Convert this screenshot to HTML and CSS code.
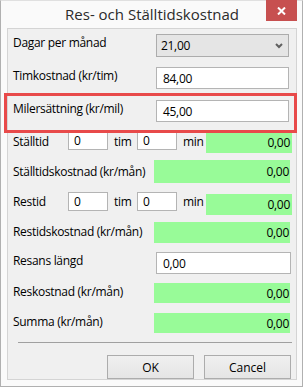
FILE: index.html
```html
<!DOCTYPE html>
<html lang="sv">
<head>
    <meta charset="UTF-8">
    <title>Res- och Ställtidskostnad</title>
    <link rel="stylesheet" href="styles.css">
</head>
<body>
    <div class="window">
        <!-- Titelrad -->
        <div class="titlebar">
            <span class="title">Res- och Ställtidskostnad</span>
            <div class="close">
                <svg width="9" height="8" viewBox="0 0 9 8">
                    <path d="M1 0.5 L8 7.5 M8 0.5 L1 7.5" stroke="#fff" stroke-width="2" fill="none"/>
                </svg>
            </div>
        </div>

        <div class="client">
            <div class="form">
                <div class="row r1">
                    <span class="label">Dagar per månad</span>
                    <div class="combo">
                        <span>21,00</span>
                        <svg width="8" height="6" viewBox="0 0 8 6">
                            <path d="M1 1 L4 4 L7 1" stroke="#606060" stroke-width="2" fill="none"/>
                        </svg>
                    </div>
                </div>
                <div class="row r2">
                    <span class="label">Timkostnad (kr/tim)</span>
                    <div class="field">84,00</div>
                </div>
                <div class="row r3">
                    <span class="label">Milersättning (kr/mil)</span>
                    <div class="field">45,00</div>
                </div>
                <div class="row r4">
                    <span class="label short">Ställtid</span>
                    <div class="small">0</div>
                    <span class="unit">tim</span>
                    <div class="small">0</div>
                    <span class="unit">min</span>
                    <div class="result narrow">0,00</div>
                </div>
                <div class="row r5">
                    <span class="label wide">Ställtidskostnad (kr/mån)</span>
                    <div class="result">0,00</div>
                </div>
                <div class="row r6">
                    <span class="label short">Restid</span>
                    <div class="small">0</div>
                    <span class="unit">tim</span>
                    <div class="small">0</div>
                    <span class="unit">min</span>
                    <div class="result narrow">0,00</div>
                </div>
                <div class="row r7">
                    <span class="label wide">Restidskostnad (kr/mån)</span>
                    <div class="result">0,00</div>
                </div>
                <div class="row r8">
                    <span class="label">Resans längd</span>
                    <div class="field long">0,00</div>
                </div>
                <div class="row r9">
                    <span class="label wide">Reskostnad (kr/mån)</span>
                    <div class="result">0,00</div>
                </div>
                <div class="row r10">
                    <span class="label wide">Summa (kr/mån)</span>
                    <div class="result">0,00</div>
                </div>
            </div>

            <div class="separator"></div>

            <div class="buttons">
                <button class="btn">OK</button>
                <button class="btn">Cancel</button>
            </div>
        </div>

        <!-- markering -->
        <div class="highlight"></div>
    </div>
</body>
</html>
```

FILE: styles.css
```css
* {
    margin: 0;
    padding: 0;
    box-sizing: border-box;
}

body {
    font-family: 'Open Sans', 'Noto Sans', sans-serif;
    font-size: 12px;
    letter-spacing: -0.3px;
    color: #000;
    background: #fff;
}

/* Fönster */
.window {
    position: relative;
    width: 303px;
    height: 387px;
    background: #fafafa;
    border: 1px solid #b0b0b0;
    border-top-color: #e0e0e0;
    padding: 0 5px 6px 6px;
    display: flex;
    flex-direction: column;
}

.titlebar {
    height: 29px;
    display: flex;
    justify-content: center;
    align-items: center;
    position: relative;
}

.title {
    font-size: 15px;
    letter-spacing: 0;
    color: #2b2b2b;
    margin-top: -1px;
}

.close {
    position: absolute;
    top: -1px;
    right: 0;
    width: 31px;
    height: 21px;
    background: #c75050;
    display: flex;
    justify-content: center;
    align-items: center;
}

.client {
    flex: 1;
    background: #f0f0f0;
    border: 1px solid #d4d4d4;
    display: flex;
    flex-direction: column;
}

/* Formulär */
.form {
    padding: 5px 0 0 5px;
}

.row {
    display: flex;
    align-items: flex-start;
}

.r1 { height: 33px; }
.r2 { height: 33px; }
.r3 { height: 30px; }
.r4 { height: 30px; }
.r5 { height: 32px; }
.r6 { height: 30px; }
.r7 { height: 30px; }
.r8 { height: 31px; }
.r9 { height: 30px; }
.r10 { height: 25px; }

.label {
    width: 143px;
    line-height: 16px;
    margin-top: 1px;
    white-space: nowrap;
}

.label.wide {
    width: 141px;
}

.label.short {
    width: 55px;
}

.r4 .label,
.r5 .label {
    margin-top: 4px;
}

.r6 .label,
.r7 .label {
    margin-top: 2px;
}

.combo {
    width: 133px;
    height: 23px;
    background: #e5e5e5;
    border: 1px solid #acacac;
    display: flex;
    align-items: center;
    justify-content: space-between;
    padding: 0 5px 0 4px;
}

.field {
    width: 133px;
    height: 22px;
    background: #fff;
    border: 1px solid #b4b4b4;
    padding: 0 6px;
    display: flex;
    align-items: center;
}

.field.long {
    width: 135px;
}

.small {
    width: 40px;
    height: 20px;
    background: #fff;
    border: 1px solid #b4b4b4;
    padding: 0 5px;
    display: flex;
    align-items: center;
}

.r6 .small {
    height: 19px;
}

.unit {
    line-height: 16px;
    margin-top: 4px;
    padding: 0 5px 0 6px;
    width: 29px;
}

.r6 .unit {
    margin-top: 2px;
}

.result {
    width: 136px;
    height: 23px;
    background: #98fb98;
    padding: 0 1px;
    display: flex;
    align-items: center;
    justify-content: flex-end;
}

.result.narrow {
    width: 86px;
    height: 21px;
    margin-top: 2px;
    padding-right: 2px;
}

.r7 .result { height: 21px; }
.r9 .result,
.r10 .result { height: 20px; }

/* Knappar */
.separator {
    height: 1px;
    background: #a0a0a0;
    margin: 4px 4px 0 10px;
}

.buttons {
    display: flex;
    justify-content: flex-end;
    gap: 10px;
    padding: 12px 5px 0 0;
}

.btn {
    width: 87px;
    height: 24px;
    font-family: inherit;
    font-size: 12px;
    letter-spacing: 0;
    color: #000;
    background: linear-gradient(#f0f0f0, #e5e5e5);
    border: 1px solid #acacac;
}

/* Röd markering */
.highlight {
    position: absolute;
    left: 3px;
    top: 92px;
    width: 293px;
    height: 40px;
    border: 3px solid #e84a4a;
}
```
